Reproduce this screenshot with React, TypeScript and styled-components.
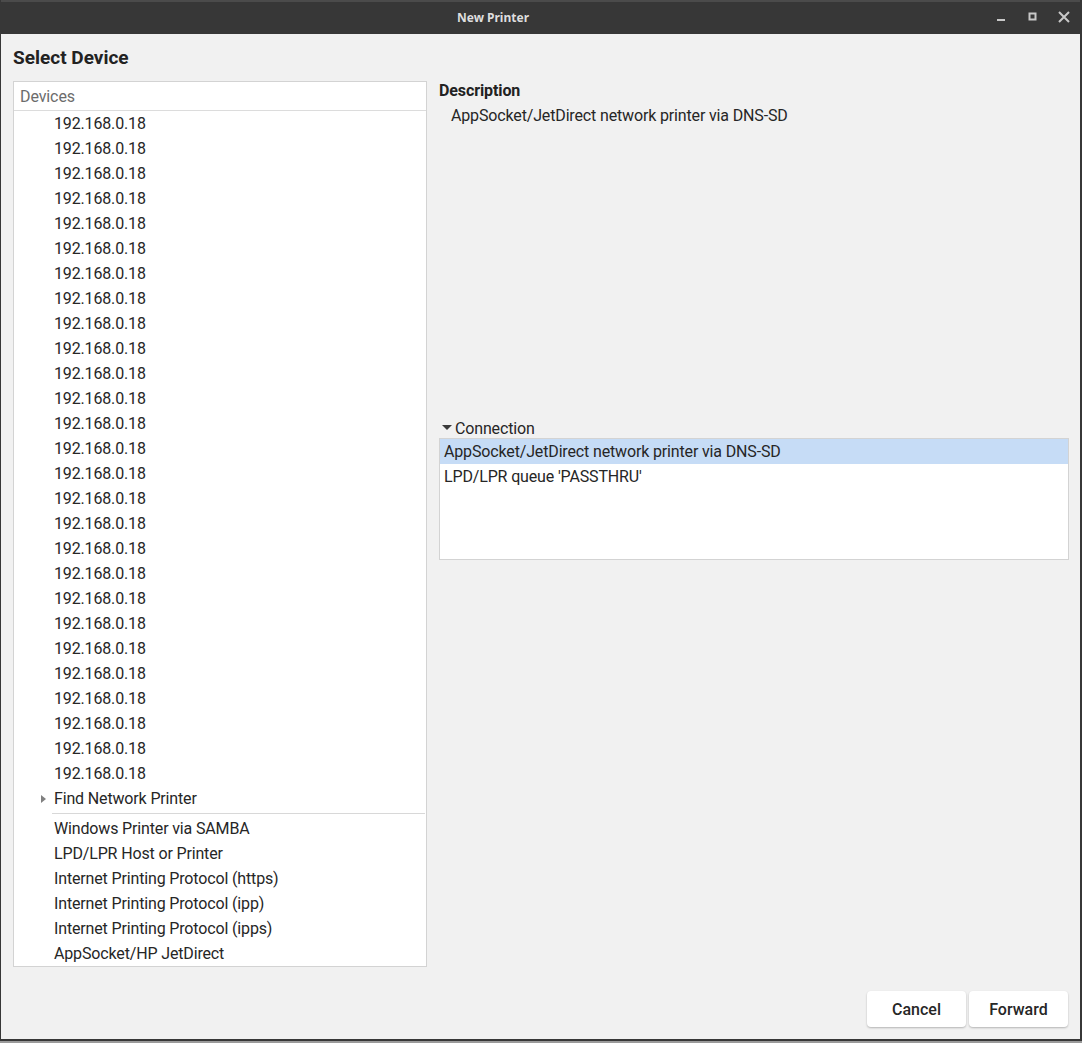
import styled, { createGlobalStyle } from 'styled-components'

const GlobalStyle = createGlobalStyle`
  html, body {
    margin: 0;
    padding: 0;
    background: #9a9a9a;
  }
  body {
    font-family: Roboto, "Noto Sans", sans-serif;
    color: #262626;
  }
`

const Window = styled.div`
  width: 1082px;
  height: 1041px;
  box-sizing: border-box;
  display: flex;
  flex-direction: column;
  background: #373737;
  border-left: 1px solid #373737;
  border-right: 2px solid #373737;
  border-bottom: 2px solid #373737;
`

const TitleBar = styled.div`
  height: 34px;
  box-sizing: border-box;
  border-top: 2px solid #4b4b4b;
  padding-bottom: 2px;
  display: flex;
  align-items: center;
  flex-shrink: 0;
`

const Title = styled.div`
  flex: 1;
  text-align: center;
  font-family: "Noto Sans", sans-serif;
  font-weight: 700;
  font-size: 12px;
  color: #dedede;
`

const Controls = styled.div`
  display: flex;
  align-items: center;
  width: 95px;
  height: 100%;
`

const ControlButton = styled.div`
  width: 32px;
  height: 32px;
  display: flex;
  align-items: center;
  justify-content: center;
  color: #c8c8c8;
`

const Body = styled.div`
  flex: 1;
  background: #f1f1f1;
  display: flex;
  flex-direction: column;
  padding: 0 11px 12px 12px;
  min-height: 0;
`

const Heading = styled.h1`
  margin: 12px 0 12px;
  font-size: 19px;
  line-height: 23px;
  font-weight: 700;
  color: #222;
`

const Main = styled.div`
  display: grid;
  grid-template-columns: 414px 1fr;
  column-gap: 12px;
  align-items: start;
  flex: 1;
`

const DevicePanel = styled.div`
  background: #fff;
  border: 1px solid #d3d3d3;
  height: 886px;
  box-sizing: border-box;
`

const PanelHeader = styled.div`
  height: 29px;
  box-sizing: border-box;
  border-bottom: 1px solid #dcdcdc;
  padding-left: 6px;
  display: flex;
  align-items: center;
  font-size: 16px;
  letter-spacing: -0.1px;
  color: #6c6c6c;
`

const Row = styled.div<{ $indent?: number; $selected?: boolean }>`
  height: 25px;
  display: flex;
  align-items: center;
  padding-left: ${(p) => p.$indent ?? 40}px;
  font-size: 16px;
  letter-spacing: -0.15px;
  color: #262626;
  white-space: nowrap;
  background: ${(p) => (p.$selected ? '#c6dcf6' : 'transparent')};
`

const Expander = styled.span<{ $open?: boolean; $width: number }>`
  width: ${(p) => p.$width}px;
  display: inline-flex;
  justify-content: flex-start;
  color: ${(p) => (p.$open ? '#3a3a3a' : '#808080')};
`

const Separator = styled.div`
  height: 5px;
  display: flex;
  align-items: center;
  padding-left: 38px;
  padding-right: 1px;
  &::after {
    content: '';
    flex: 1;
    border-top: 1px solid #d8d8d8;
  }
`

const RightColumn = styled.div`
  display: flex;
  flex-direction: column;
`

const SectionLabel = styled.div`
  font-size: 16px;
  font-weight: 700;
  line-height: 19px;
  letter-spacing: -0.1px;
  color: #222;
`

const DescriptionText = styled.div`
  font-size: 16px;
  line-height: 20px;
  margin-top: 6px;
  padding-left: 12px;
  letter-spacing: -0.15px;
  color: #262626;
`

const ConnectionToggle = styled.div`
  margin-top: 292px;
  height: 20px;
  padding-left: 3px;
  display: flex;
  align-items: center;
  font-size: 16px;
  letter-spacing: -0.15px;
  color: #262626;
`

const ConnectionList = styled.div`
  height: 122px;
  box-sizing: border-box;
  background: #fff;
  border: 1px solid #d3d3d3;
`

const ButtonRow = styled.div`
  display: flex;
  justify-content: flex-end;
  gap: 3px;
  padding-right: 1px;
`

const Button = styled.button`
  width: 99px;
  height: 36px;
  border: none;
  border-radius: 4px;
  background: #fff;
  box-shadow: 0 1px 2px rgba(0, 0, 0, 0.25);
  font-family: Roboto, sans-serif;
  font-size: 16px;
  font-weight: 500;
  color: #262626;
`

const RightTriangle = () => (
  <svg width="5" height="8" viewBox="0 0 5 8">
    <path d="M0 0 L5 4 L0 8 Z" fill="currentColor" />
  </svg>
)

const DownTriangle = () => (
  <svg width="10" height="6" viewBox="0 0 10 6">
    <path d="M0 0 L10 0 L5 5 Z" fill="currentColor" />
  </svg>
)

const ips = Array.from({ length: 27 }, () => '192.168.0.18')
const others = [
  'Windows Printer via SAMBA',
  'LPD/LPR Host or Printer',
  'Internet Printing Protocol (https)',
  'Internet Printing Protocol (ipp)',
  'Internet Printing Protocol (ipps)',
  'AppSocket/HP JetDirect',
]

export default function App() {
  return (
    <>
      <GlobalStyle />
      <Window>
        <TitleBar>
          <Title>New Printer</Title>
          <Controls>
            <ControlButton>
              <svg width="10" height="10" viewBox="0 0 10 10">
                <rect x="1" y="7" width="8" height="2" fill="currentColor" />
              </svg>
            </ControlButton>
            <ControlButton>
              <svg width="10" height="10" viewBox="0 0 10 10">
                <rect x="1.5" y="1.5" width="6" height="6" fill="none" stroke="currentColor" strokeWidth="2" />
              </svg>
            </ControlButton>
            <ControlButton>
              <svg width="12" height="12" viewBox="0 0 12 12">
                <path d="M1 1 L11 11 M11 1 L1 11" stroke="currentColor" strokeWidth="2" />
              </svg>
            </ControlButton>
          </Controls>
        </TitleBar>
        <Body>
          <Heading>Select Device</Heading>
          <Main>
            <DevicePanel>
              <PanelHeader>Devices</PanelHeader>
              {ips.map((ip, i) => (
                <Row key={i}>{ip}</Row>
              ))}
              <Row $indent={27}>
                <Expander $width={13}>
                  <RightTriangle />
                </Expander>
                Find Network Printer
              </Row>
              <Separator />
              {others.map((t) => (
                <Row key={t}>{t}</Row>
              ))}
            </DevicePanel>
            <RightColumn>
              <SectionLabel>Description</SectionLabel>
              <DescriptionText>AppSocket/JetDirect network printer via DNS-SD</DescriptionText>
              <ConnectionToggle>
                <Expander $open $width={13}>
                  <DownTriangle />
                </Expander>
                Connection
              </ConnectionToggle>
              <ConnectionList>
                <Row $indent={4} $selected>
                  AppSocket/JetDirect network printer via DNS-SD
                </Row>
                <Row $indent={4}>LPD/LPR queue 'PASSTHRU'</Row>
              </ConnectionList>
            </RightColumn>
          </Main>
          <ButtonRow>
            <Button>Cancel</Button>
            <Button>Forward</Button>
          </ButtonRow>
        </Body>
      </Window>
    </>
  )
}
